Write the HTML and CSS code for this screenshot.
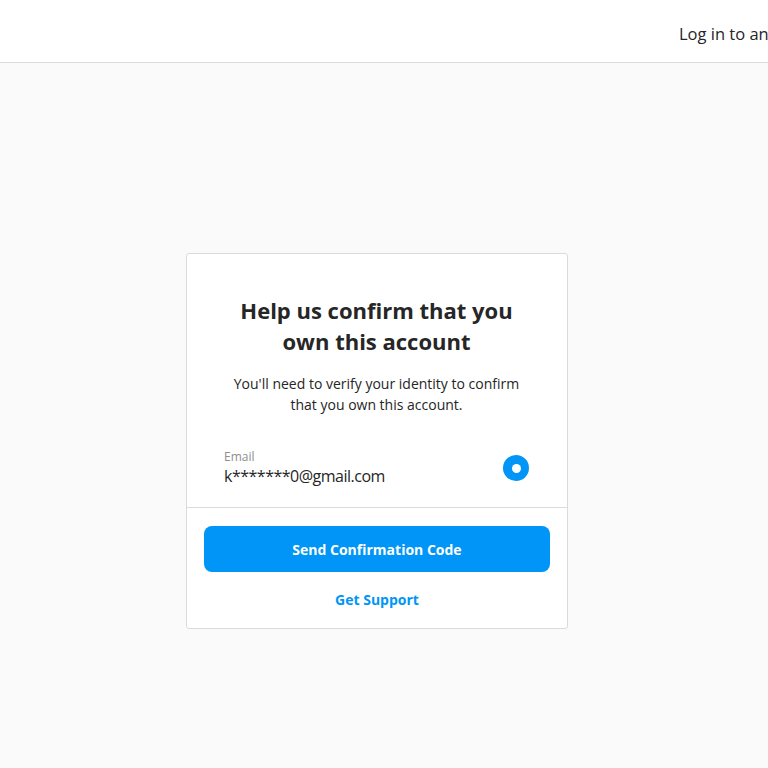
FILE: index.html
```html
<!DOCTYPE html>
<html lang="en">
<head>
<meta charset="utf-8">
<title>Help us confirm that you own this account</title>
<link rel="stylesheet" href="styles.css">
</head>
<body>
<header class="topbar">
  <div class="topbar-right">Log in to another account</div>
</header>
<main class="page">
  <section class="card">
    <div class="card-top">
      <h1 class="title">Help us confirm that you own this account</h1>
      <p class="desc">You'll need to verify your identity to confirm that you own this account.</p>
      <div class="option">
        <div class="option-text">
          <div class="option-label">Email</div>
          <div class="option-value">k*******0@gmail.com</div>
        </div>
        <span class="radio"></span>
      </div>
    </div>
    <div class="card-bottom">
      <button class="btn-primary">Send Confirmation Code</button>
      <a class="link" href="#">Get Support</a>
    </div>
  </section>
</main>
</body>
</html>
```
FILE: styles.css
```css
* { box-sizing: border-box; }
html, body { margin: 0; padding: 0; }
body {
  font-family: "Open Sans", "Noto Sans", Arial, sans-serif;
  background: #fafafa;
  color: #262626;
  height: 768px;
  overflow: hidden;
}
.topbar {
  height: 63px;
  background: #fff;
  border-bottom: 1px solid #dbdbdb;
  display: flex;
  align-items: center;
  overflow: hidden;
}
.topbar-right {
  margin-left: 679px;
  white-space: nowrap;
  font-size: 16.5px;
  color: #262626;
  padding-top: 4px;
}
.page {
  display: flex;
  justify-content: center;
  padding-top: 190px;
  padding-right: 14px;
}
.card {
  width: 382px;
  background: #fff;
  border: 1px solid #dbdbdb;
  border-radius: 3px;
}
.card-top {
  padding: 41px 38px 20px 37px;
  border-bottom: 1px solid #dbdbdb;
  text-align: center;
}
.title {
  margin: 0 auto;
  width: 300px;
  font-size: 22px;
  font-weight: 700;
  line-height: 31px;
  color: #262626;
}
.desc {
  margin: 16px auto 0;
  font-size: 14px;
  line-height: 21px;
  color: #262626;
}
.option {
  margin-top: 34px;
  display: flex;
  align-items: center;
  justify-content: space-between;
  text-align: left;
}
.option-label {
  font-size: 12px;
  line-height: 16px;
  color: #8e8e8e;
}
.option-value {
  font-size: 16px;
  line-height: 22px;
  letter-spacing: -0.5px;
  color: #262626;
}
.radio {
  width: 26px;
  height: 26px;
  border-radius: 50%;
  background: #0095f6;
  display: flex;
  align-items: center;
  justify-content: center;
  margin-right: 0;
}
.radio::after {
  content: "";
  width: 9px;
  height: 9px;
  border-radius: 50%;
  background: #fff;
}
.card-bottom {
  padding: 18px 17px 18px;
  display: flex;
  flex-direction: column;
  align-items: center;
}
.btn-primary {
  width: 100%;
  height: 46px;
  border: 0;
  border-radius: 8px;
  background: #0095f6;
  color: #fff;
  font-family: inherit;
  font-size: 14px;
  font-weight: 700;
}
.link {
  margin-top: 18px;
  font-size: 14px;
  font-weight: 700;
  color: #0095f6;
  text-decoration: none;
  line-height: 20px;
}
```
